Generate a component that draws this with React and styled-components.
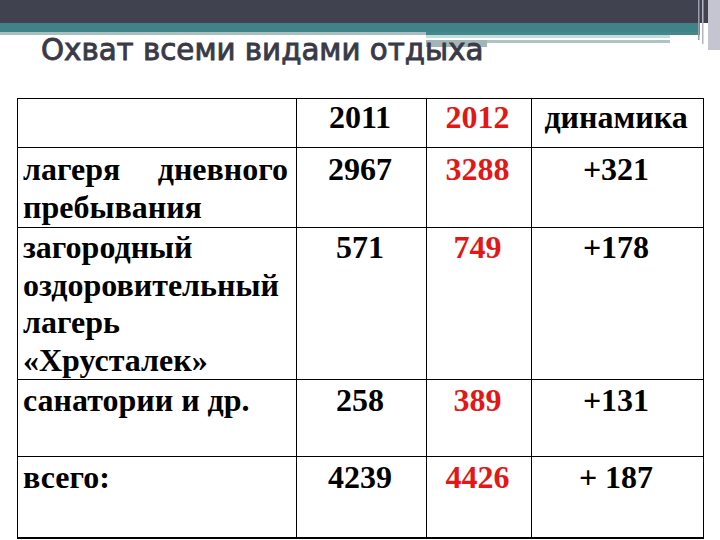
import React from 'react';
import styled, { createGlobalStyle } from 'styled-components';

const GlobalStyle = createGlobalStyle`
  html, body {
    margin: 0;
    padding: 0;
    background: #ffffff;
  }
`;

const Slide = styled.div`
  width: 720px;
  height: 540px;
  position: relative;
  overflow: hidden;
  background: #ffffff;
`;

const Banner = styled.svg`
  position: absolute;
  top: 0;
  left: 0;
  width: 720px;
  height: 52px;
`;

const Header = styled.header`
  position: relative;
  height: 98px;
  box-sizing: border-box;
  padding: 32px 0 0 41px;
`;

const Title = styled.h1`
  position: relative;
  margin: 0;
  font-family: "DejaVu Sans", Verdana, sans-serif;
  font-weight: normal;
  font-size: 29.3px;
  line-height: 36px;
  color: #393a48;
  -webkit-text-stroke: 0.9px #393a48;
`;

const Table = styled.table`
  margin-left: 17px;
  width: 686px;
  table-layout: fixed;
  border-collapse: collapse;
  border-bottom: 2px solid #000;
  font-family: "Liberation Serif", "Times New Roman", serif;
  font-weight: bold;
  font-size: 32px;
  line-height: 37.5px;
  color: #000;
`;

const Row = styled.tr`
  height: ${(p) => p.$h}px;
`;

const Cell = styled.td`
  border: 1px solid #000;
  vertical-align: top;
  padding: ${(p) => p.$pt}px 8px 0 5px;
  text-align: ${(p) => (p.$label ? 'justify' : 'center')};
  color: ${(p) => (p.$red ? '#e41717' : '#000')};
`;

const rows = [
  { h: 80, pt: 3, label: 'лагеря дневного пребывания', a: '2967', b: '3288', d: '+321' },
  { h: 152, pt: 1, label: 'загородный оздоровительный лагерь «Хрусталек»', a: '571', b: '749', d: '+178' },
  { h: 77, pt: 2, label: 'санатории и др.', a: '258', b: '389', d: '+131' },
  { h: 81, pt: 2, label: 'всего:', a: '4239', b: '4426', d: '+ 187' },
];

export default function App() {
  return (
    <>
      <GlobalStyle />
      <Slide>
        <Header>
          <Banner viewBox="0 0 720 52">
            <rect x="0" y="0" width="720" height="23" fill="#40424f" />
            <rect x="0" y="20" width="700" height="3" fill="#463f54" />
            <rect x="0" y="23" width="700" height="9" fill="#3f8388" />
            <rect x="0" y="32" width="426" height="3" fill="#a9bebf" />
            <rect x="426" y="32" width="274" height="3" fill="#46878c" />
            <rect x="426" y="35" width="244" height="3" fill="#bfdfe3" />
            <rect x="426" y="40" width="244" height="3" fill="#b0c3c3" />
            <rect x="426" y="40" width="61" height="7" fill="#a3b5b5" />
            <rect x="698" y="0" width="1.5" height="40" fill="#9a9dac" />
            <rect x="702" y="0" width="1.5" height="44" fill="#b3b5c2" />
            <rect x="708" y="0" width="12" height="50" fill="#c4c5d0" />
          </Banner>
          <Title>Охват всеми видами отдыха</Title>
        </Header>
        <Table>
          <colgroup>
            <col style={{ width: 279 }} />
            <col style={{ width: 130 }} />
            <col style={{ width: 105 }} />
            <col style={{ width: 172 }} />
          </colgroup>
          <tbody>
            <Row $h={49}>
              <Cell $pt={0} $label />
              <Cell $pt={0}>2011</Cell>
              <Cell $pt={0} $red>2012</Cell>
              <Cell $pt={0}>динамика</Cell>
            </Row>
            {rows.map((r) => (
              <Row key={r.label} $h={r.h}>
                <Cell $pt={r.pt} $label>{r.label}</Cell>
                <Cell $pt={r.pt}>{r.a}</Cell>
                <Cell $pt={r.pt} $red>{r.b}</Cell>
                <Cell $pt={r.pt}>{r.d}</Cell>
              </Row>
            ))}
          </tbody>
        </Table>
      </Slide>
    </>
  );
}
